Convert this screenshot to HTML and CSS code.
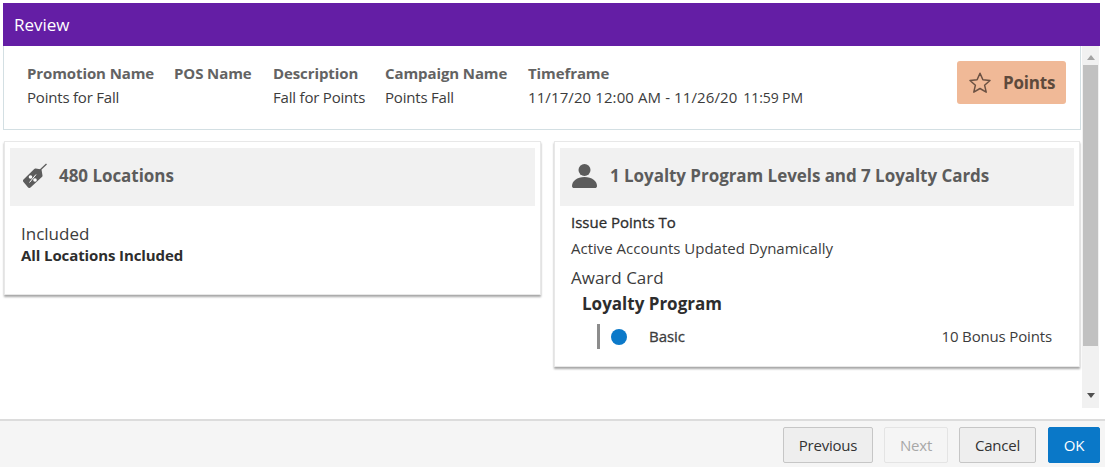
FILE: index.html
```html
<!DOCTYPE html>
<html lang="en">
<head>
  <meta charset="UTF-8">
  <title>Review</title>
  <link rel="stylesheet" href="styles.css">
</head>
<body>
  <div class="dialog">
    <div class="dialog-title">Review</div>
    <div class="dialog-body">
      <div class="content">
        <div class="summary">
          <div class="field field-promo">
            <div class="field-label">Promotion Name</div>
            <div class="field-value">Points for Fall</div>
          </div>
          <div class="field field-pos">
            <div class="field-label">POS Name</div>
          </div>
          <div class="field field-desc">
            <div class="field-label">Description</div>
            <div class="field-value">Fall for Points</div>
          </div>
          <div class="field field-campaign">
            <div class="field-label">Campaign Name</div>
            <div class="field-value">Points Fall</div>
          </div>
          <div class="field">
            <div class="field-label">Timeframe</div>
            <div class="field-value field-dates">11/17/20 12:00 AM - 11/26/20 <span class="time-small">11:59 PM</span></div>
          </div>
          <div class="points-badge">
            <svg class="star" viewBox="0 0 24 24" width="24" height="24"><path d="M12 2.2l2.9 6.6 7.1.7-5.4 4.7 1.6 7-6.2-3.7-6.2 3.7 1.6-7L2 9.500l7.100-.7z" fill="none" stroke="#6b5142" stroke-width="1.500" stroke-linejoin="round"/></svg>
            <span>Points</span>
          </div>
        </div>
        <div class="cards">
          <div class="card card-left">
            <div class="card-head">
              <svg class="tag-icon" viewBox="0 0 26 26" width="26" height="26">
                <path d="M1.500 17.500L12 7.200c.5-.5 1-.7 1.700-.6l5.800 1 1 5.800c.1.700-.1 1.200-.6 1.700L8.500 25.500c-.7.7-1.700.7-2.400 0L1.500 19.900c-.7-.7-.7-1.700 0-2.400z" fill="#5c5c5c"/>
                <path d="M17 9L24.500 2" stroke="#5c5c5c" stroke-width="1.300" fill="none"/>
                <circle cx="8.500" cy="15" r="1.800" fill="#fff"/>
                <circle cx="13" cy="18" r="1.800" fill="#fff"/>
                <path d="M7.500 20.500l6.500-8" stroke="#fff" stroke-width="1"/>
              </svg>
              <span>480 Locations</span>
            </div>
            <div class="card-body-left">
              <div class="big-text">Included</div>
              <div class="bold-text">All Locations Included</div>
            </div>
          </div>
          <div class="card card-right">
            <div class="card-head">
              <svg class="user-icon" viewBox="0 0 26 26" width="26" height="26">
                <circle cx="12.500" cy="8" r="6" fill="#5c5c5c"/>
                <path d="M0 24c0-5 5-9 12.500-9s12.500 4 12.500 9c0 1.500-1 2-2 2H2c-1 0-2-.5-2-2z" fill="#5c5c5c"/>
              </svg>
              <span>1 Loyalty Program Levels and 7 Loyalty Cards</span>
            </div>
            <div class="card-body-right">
              <div class="issue-label">Issue Points To</div>
              <div class="issue-value">Active Accounts Updated Dynamically</div>
              <div class="big-text award">Award Card</div>
              <div class="program">Loyalty Program</div>
              <div class="level">
                <span class="level-bar"></span>
                <span class="level-dot"></span>
                <span class="level-name">Basic</span>
                <span class="level-points">10 Bonus Points</span>
              </div>
            </div>
          </div>
        </div>
      </div>
      <div class="scrollbar">
        <span class="arrow-up"></span>
        <div class="thumb"></div>
        <span class="arrow-down"></span>
      </div>
    </div>
    <div class="dialog-footer">
      <button class="btn btn-prev">Previous</button>
      <button class="btn btn-next" disabled>Next</button>
      <button class="btn btn-cancel">Cancel</button>
      <button class="btn btn-ok">OK</button>
    </div>
  </div>
</body>
</html>
```

FILE: styles.css
```css
* {
  box-sizing: border-box;
}
body {
  margin: 0;
  background: #fff;
  font-family: "Open Sans", "Noto Sans", Arial, sans-serif;
  font-size: 15px;
  color: #3c3c3c;
  overflow: hidden;
}
.dialog {
  width: 1105px;
  height: 467px;
  padding-top: 3px;
  display: flex;
  flex-direction: column;
}
.dialog-title {
  margin-left: 3px;
  width: 1097px;
  height: 43px;
  padding-left: 11px;
  line-height: 43px;
  background: #641ea5;
  color: #fff;
  font-size: 17px;
}
.dialog-body {
  display: flex;
  height: 362px;
  padding-left: 3px;
}
.content {
  width: 1079px;
}
.summary {
  height: 84px;
  padding: 17px 14px 0 23px;
  display: flex;
  border: 1px solid #d3dfe3;
  border-top: 0;
  width: 1078px;
}
.field-label {
  font-weight: 700;
  color: #636363;
  line-height: 20px;
  letter-spacing: -0.1px;
  white-space: nowrap;
}
.field-value {
  margin-top: 4px;
  line-height: 20px;
  letter-spacing: -0.2px;
  white-space: nowrap;
}
.field-dates {
  letter-spacing: 0.1px;
}
.field-promo {
  width: 147px;
}
.field-pos {
  width: 99px;
}
.field-desc {
  width: 112px;
}
.field-campaign {
  width: 143px;
}
.time-small {
  margin-left: 2px;
  font-size: 14px;
  letter-spacing: -0.1px;
}
.points-badge {
  margin-left: auto;
  margin-top: -2px;
  width: 109px;
  height: 43px;
  display: flex;
  align-items: center;
  gap: 11px;
  padding-left: 11px;
  background: #f0b997;
  border-radius: 3px;
  font-size: 17px;
  font-weight: 700;
  color: #5e4a3c;
  letter-spacing: -0.2px;
}
.cards {
  display: flex;
  align-items: flex-start;
  gap: 13px;
  padding: 11px 0 0 1px;
}
.card {
  background: #fff;
  padding: 6px 5px 0;
  border: 1px solid #e8e8e8;
  box-shadow: 0 2px 2px rgba(0, 0, 0, 0.35);
}
.card-left {
  width: 537px;
  height: 154px;
}
.card-right {
  width: 526px;
  height: 226px;
}
.card-head {
  height: 58px;
  padding-bottom: 4px;
  display: flex;
  align-items: center;
  background: #f1f1f1;
  font-size: 17px;
  font-weight: 700;
  color: #5c5c5c;
  letter-spacing: -0.05px;
}
.tag-icon {
  margin: 0 11px 0 12px;
}
.user-icon {
  margin: 0 12px 0 12px;
}
.card-body-left {
  padding: 17px 0 0 11px;
}
.big-text {
  font-size: 17px;
  line-height: 22px;
}
.bold-text {
  font-weight: 700;
  color: #2d2d2d;
  line-height: 20px;
  letter-spacing: -0.1px;
}
.card-body-right {
  padding: 6px 22px 0 11px;
}
.issue-label {
  line-height: 20px;
  color: #2d2d2d;
  -webkit-text-stroke: 0.3px #2d2d2d;
}
.issue-value {
  margin-top: 6px;
  line-height: 20px;
}
.award {
  margin-top: 9px;
}
.program {
  margin: 4px 0 0 11px;
  font-size: 17px;
  line-height: 22px;
  font-weight: 700;
  color: #2d2d2d;
}
.level {
  display: flex;
  align-items: center;
  margin: 9px 0 0 26px;
  height: 25px;
}
.level-bar {
  width: 3px;
  height: 25px;
  background: #8c8c8c;
}
.level-dot {
  width: 16px;
  height: 16px;
  margin-left: 11px;
  border-radius: 50%;
  background: #0b79c9;
}
.level-name {
  margin-left: 22px;
  padding-bottom: 2px;
  letter-spacing: -0.05px;
  -webkit-text-stroke: 0.3px #3c3c3c;
}
.level-points {
  margin-left: auto;
  padding-bottom: 2px;
  letter-spacing: -0.15px;
}
.scrollbar {
  width: 17px;
  background: #f1f1f1;
  display: flex;
  flex-direction: column;
  align-items: center;
  padding-top: 9px;
}
.arrow-up {
  border: 4px solid transparent;
  border-top: 0;
  border-bottom: 5px solid #a3a3a3;
}
.thumb {
  width: 15px;
  height: 281px;
  margin-top: 5px;
  background: #c1c1c1;
}
.arrow-down {
  margin-top: 47px;
  border: 4px solid transparent;
  border-bottom: 0;
  border-top: 5px solid #505050;
}
.dialog-footer {
  margin-top: 11px;
  height: 48px;
  display: flex;
  justify-content: flex-end;
  gap: 11px;
  padding: 6px 5px 0 0;
  background: #f5f5f5;
  border-top: 2px solid #dcdcdc;
}
.btn {
  height: 36px;
  margin: 0;
  padding: 0;
  font-family: inherit;
  font-size: 15px;
  letter-spacing: -0.2px;
  color: #333;
  background: #eeeeee;
  border: 1px solid #c6c6c6;
  border-radius: 2px;
}
.btn-prev {
  width: 90px;
}
.btn-next {
  width: 64px;
  color: #a8a8a8;
  background: #f5f5f5;
  border-color: #e4e4e4;
}
.btn-cancel {
  width: 77px;
  margin-right: 1px;
}
.btn-ok {
  width: 52px;
  color: #fff;
  background: #0a78c8;
  border-color: #0a78c8;
}
```
